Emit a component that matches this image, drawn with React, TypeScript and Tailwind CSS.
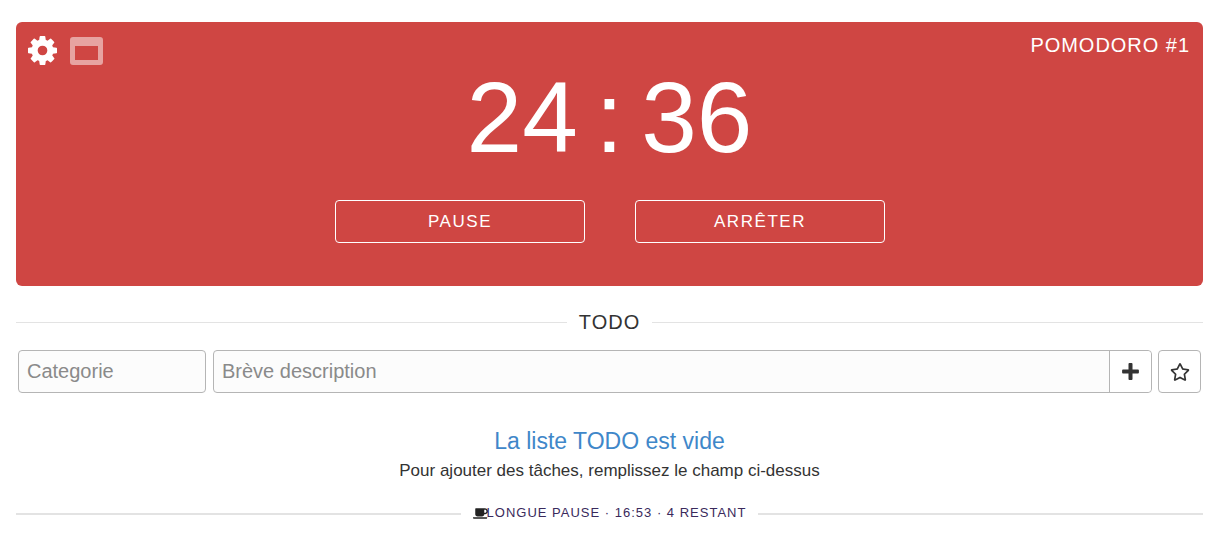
import { FaRegStar, FaCoffee } from "react-icons/fa";

function Gear() {
  return (
    <svg viewBox="128 128 1536 1536" className="w-[29px] h-[29px] fill-white">
      <path d="M1152 896q0-106-75-181t-181-75-181 75-75 181 75 181 181 75 181-75 75-181zm512-109v222q0 12-8 23t-20 13l-185 28q-19 54-39 91 35 50 107 138 10 12 10 25t-9 23q-27 37-99 108t-94 71q-12 0-26-9l-138-108q-44 23-91 38-16 136-29 186-7 28-36 28h-222q-14 0-24.5-8.5t-11.5-21.5l-28-184q-49-16-90-37l-141 107q-10 9-25 9-14 0-25-11-126-114-165-168-7-10-7-23 0-12 8-23 15-21 51-66.5t54-70.5q-27-50-41-99l-183-27q-13-2-21-12.5t-8-23.5v-222q0-12 8-23t19-13l186-28q14-46 39-92-40-57-107-138-10-12-10-24 0-10 9-23 26-36 98.5-107.5t94.5-71.5q13 0 26 10l138 107q44-23 91-38 16-136 29-186 7-28 36-28h222q14 0 24.5 8.5t11.5 21.5l28 184q49 16 90 37l142-107q9-9 24-9 13 0 25 10 129 119 165 170 7 8 7 22 0 12-8 23-15 21-51 66.5t-54 70.5q26 50 41 98l183 28q13 2 21 12.5t8 23.5z" />
    </svg>
  );
}

function WindowIcon() {
  return (
    <svg viewBox="0 0 33 28" className="w-[33px] h-[28px] fill-white opacity-50">
      <path fillRule="evenodd" d="M3 0h27a3 3 0 0 1 3 3v22a3 3 0 0 1-3 3H3a3 3 0 0 1-3-3V3a3 3 0 0 1 3-3zM5 9v14h23V9z" />
    </svg>
  );
}

function Plus() {
  return (
    <svg viewBox="0 0 17 17" className="w-[17px] h-[17px] fill-[#333333]">
      <path d="M6.5 1a.9.9 0 0 1 .9-.9h2.2a.9.9 0 0 1 .9.9v5.5H16a.9.9 0 0 1 .9.9v2.2a.9.9 0 0 1-.9.9h-5.5V16a.9.9 0 0 1-.9.9H7.4a.9.9 0 0 1-.9-.9v-5.5H1a.9.9 0 0 1-.9-.9V7.4A.9.9 0 0 1 1 6.5h5.5z" />
    </svg>
  );
}

export default function App() {
  return (
    <div className="w-[1222px] h-[541px] overflow-hidden bg-white pl-4 pt-[22px] pr-[19px] font-['Liberation_Sans',Arial,sans-serif] text-[#212529]">
      <section className="h-[264px] rounded-[6px] bg-[#cf4643] text-white flex flex-col">
        <div className="h-[50px] flex justify-between pl-[12px] pr-[13px] pt-[12px]">
          <div className="flex items-start gap-[13px]">
            <div className="mt-[2px]"><Gear /></div>
            <div className="mt-[3px]"><WindowIcon /></div>
          </div>
          <div className="text-[20px] leading-[22px] tracking-[0.97px]">POMODORO #1</div>
        </div>
        <div className="h-[90px] flex justify-center items-center text-[100px] leading-[90px] whitespace-pre [word-spacing:-10px]">24 : 36</div>
        <div className="mt-[38px] flex justify-center gap-[50px] pl-[1px]">
          <button className="w-[250px] h-[43px] rounded-[4px] border border-white text-[17px] tracking-[1.55px]">PAUSE</button>
          <button className="w-[250px] h-[43px] rounded-[4px] border border-white text-[17px] tracking-[1.55px]">ARRÊTER</button>
        </div>
      </section>

      <div className="mt-[24px] h-[24px] flex items-center gap-[12px]">
        <div className="flex-1 h-px bg-[#e3e3e3]" />
        <div className="text-[20px] leading-[24px] tracking-[1px] text-[#333333]">TODO</div>
        <div className="flex-1 h-px bg-[#e3e3e3]" />
      </div>

      <div className="mt-[16px] px-[2px] flex h-[43px]">
        <div className="w-[188px] rounded-[4px] border border-[#b5b5b5] bg-[#fcfcfc] flex items-center pl-[8px] pb-[2px] text-[20px] text-[#8a8a8a]">Categorie</div>
        <div className="ml-[7px] flex-1 flex rounded-[4px] border border-[#b5b5b5] bg-[#fcfcfc]">
          <div className="flex-1 flex items-center pl-[8px] pb-[2px] text-[20px] text-[#8a8a8a]">Brève description</div>
          <div className="w-[42px] border-l border-[#b5b5b5] flex items-center justify-center bg-white rounded-r-[4px]">
            <Plus />
          </div>
        </div>
        <div className="ml-[6px] w-[43px] rounded-[4px] border border-[#b5b5b5] flex items-center justify-center">
          <FaRegStar className="w-[20px] h-[20px] text-[#333333]" />
        </div>
      </div>

      <div className="mt-[34px] text-center">
        <div className="text-[23px] leading-[28px] text-[#3f87c9]">La liste TODO est vide</div>
        <div className="mt-[4px] text-[17px] leading-[24px] text-[#333333]">Pour ajouter des tâches, remplissez le champ ci-dessus</div>
      </div>

      <div className="mt-[20px] h-[20px] flex items-center gap-[12px]">
        <div className="flex-1 h-[2px] mt-[1px] bg-[#e3e3e3]" />
        <div className="flex items-center text-[13px] tracking-[1px] text-[#3a2a5c]">
          <FaCoffee className="w-[15px] h-[15px] text-[#222222]" />
          <span className="-ml-[1px]">LONGUE PAUSE · 16:53 · 4 RESTANT</span>
        </div>
        <div className="flex-1 h-[2px] mt-[1px] bg-[#e3e3e3]" />
      </div>
    </div>
  );
}
